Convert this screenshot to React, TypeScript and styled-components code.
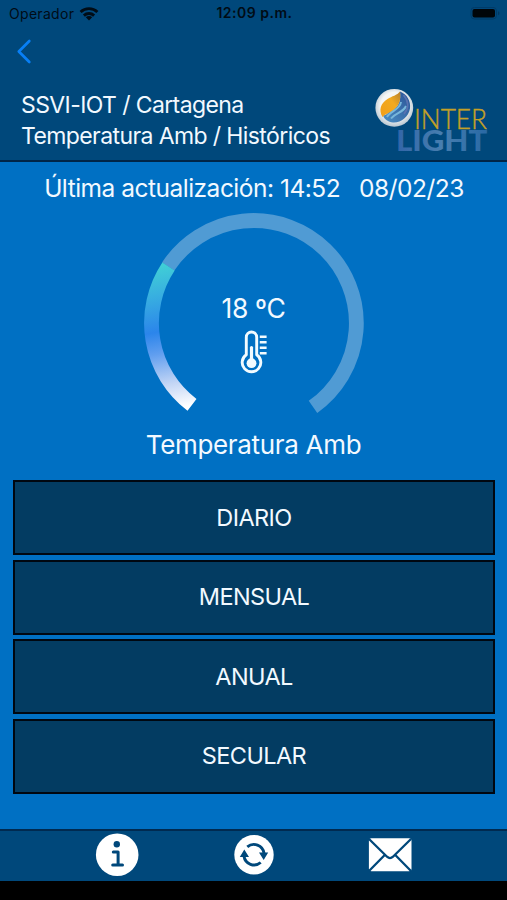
import React from "react";
import styled, { createGlobalStyle } from "styled-components";

const GlobalStyle = createGlobalStyle`
  *, *::before, *::after { box-sizing: border-box; }
  html, body { margin: 0; background: #000; }
  body { font-family: Inter, "Liberation Sans", sans-serif; color: #f2f9ff; }
  svg { display: block; }
`;

const Screen = styled.div`
  display: flex;
  flex-direction: column;
  width: 100%;
  height: 900px;
  overflow: hidden;
  background: #000;
`;

const Header = styled.header`
  display: flex;
  flex-direction: column;
  flex: 0 0 162px;
  background: #00487b;
  border-bottom: 2px solid #002547;
`;

const StatusBar = styled.div`
  display: grid;
  grid-template-columns: 1fr auto 1fr;
  align-items: center;
  height: 28px;
  padding: 0 7px 0 9px;
  color: #000c16;
`;

const Carrier = styled.div`
  display: flex;
  align-items: center;
  gap: 5px;
  font-size: 14px;
  line-height: 28px;
  letter-spacing: 0.3px;
`;

const Clock = styled.div`
  font-size: 14px;
  font-weight: 600;
  letter-spacing: 0.5px;
  line-height: 26px;
  margin-bottom: 2px;
  white-space: nowrap;
`;

const Battery = styled.div`
  display: flex;
  justify-content: flex-end;
`;

const BackButton = styled.button`
  width: 40px;
  height: 48px;
  margin-left: 8px;
  padding: 8px;
  border: 0;
  background: none;
`;

const TitleRow = styled.div`
  display: flex;
  justify-content: space-between;
  padding: 10px 18px 0 21px;
`;

const Breadcrumb = styled.h1`
  margin: 4px 0 0;
  font-size: 23px;
  font-weight: 400;
  line-height: 30.5px;
  letter-spacing: -0.6px;
  white-space: nowrap;
`;

const Line = styled.span`
  display: block;
`;

const Main = styled.main`
  display: flex;
  flex-direction: column;
  flex: 1;
  align-items: center;
  background: #0070c3;
`;

const Updated = styled.div`
  display: flex;
  gap: 19px;
  margin-top: 9px;
  padding-left: 1px;
  font-size: 24.5px;
  line-height: 34px;
  letter-spacing: -0.5px;
  white-space: nowrap;
`;

const Gauge = styled.div`
  display: grid;
  width: 222px;
  height: 210px;
  margin-top: 5px;
  > * { grid-area: 1 / 1; }
`;

const Reading = styled.div`
  display: flex;
  flex-direction: column;
  align-items: center;
  gap: 4px;
  padding-top: 81px;
  font-size: 26.5px;
  line-height: 34px;
  letter-spacing: -0.4px;
`;

const GaugeLabel = styled.div`
  margin-top: 6px;
  font-size: 26px;
  line-height: 38px;
  letter-spacing: -0.32px;
`;

const PeriodList = styled.nav`
  display: flex;
  flex-direction: column;
  align-self: stretch;
  gap: 4.5px;
  padding: 16px 12px 0 13px;
`;

const PeriodButton = styled.button`
  height: 75px;
  padding: 0;
  border: 2px solid #000710;
  background: #033c62;
  color: inherit;
  font: 400 23.5px/30px Inter, "Liberation Sans", sans-serif;
  letter-spacing: -0.6px;
`;

const Footer = styled.footer`
  display: grid;
  grid-template-columns: repeat(3, 136.5px);
  justify-content: center;
  justify-items: center;
  align-items: center;
  flex: 0 0 52px;
  padding-bottom: 2px;
  border-top: 2px solid #002a50;
  background: #00487b;
`;

const HomeArea = styled.div`
  flex: 0 0 19px;
`;

const periods = ["DIARIO", "MENSUAL", "ANUAL", "SECULAR"];

const WifiIcon = () => (
  <svg width="20" height="16" viewBox="0 0 20 16">
    <g fill="none" stroke="#000c16" strokeWidth="2.9">
      <path d="M1.6 6A12.2 12.2 0 0 1 18.4 6" />
      <path d="M4.9 9.6A7.4 7.4 0 0 1 15.1 9.6" />
    </g>
    <path d="M6.8 11.3a4.6 4.6 0 0 1 6.4 0L10 14.6Z" fill="#000c16" />
  </svg>
);

const BatteryIcon = () => (
  <svg width="30" height="14" viewBox="0 0 30 14">
    <rect x="1" y=".4" width="25.5" height="11.6" rx="3.5" fill="none" stroke="#003b67" />
    <rect x="2.500" y="1.900" width="22.500" height="8.600" rx="2" fill="#000509" />
    <path d="M28 4.200v4c2-.8 2-3.200 0-4Z" fill="#003862" />
  </svg>
);

const BackIcon = () => (
  <svg width="18" height="26" viewBox="0 0 18 26">
    <path d="M13.300 2.500 2.800 13 13.300 23.500" transform="translate(0 -.5)" fill="none" stroke="#087ff5" strokeWidth="2.700" strokeLinecap="round" strokeLinejoin="round" />
  </svg>
);

const Logo = () => (
  <svg width="116" height="72" viewBox="0 0 116 72" overflow="visible" aria-label="Inter Light">
    <defs>
      <radialGradient id="pearl" cx="50%" cy="45%" r="55%">
        <stop offset=".65" stopColor="#f5f6f5" />
        <stop offset="1" stopColor="#b7c5d0" />
      </radialGradient>
      <linearGradient id="flame" x1="0" y1="1" x2="1" y2="0">
        <stop offset="0" stopColor="#f19e18" />
        <stop offset=".6" stopColor="#f2aa20" />
        <stop offset="1" stopColor="#b5802e" />
      </linearGradient>
      <linearGradient id="wave" x1="0" y1="1" x2="1" y2="0">
        <stop offset="0" stopColor="#4a8fc4" />
        <stop offset="1" stopColor="#2a5296" />
      </linearGradient>
      <linearGradient id="steel" x1="0" x2="1">
        <stop offset="0" stopColor="#3265a8" />
        <stop offset=".5" stopColor="#477eaf" />
        <stop offset="1" stopColor="#2969a5" />
      </linearGradient>
    </defs>
    <circle cx="21.300" cy="21.800" r="18.900" fill="url(#pearl)" />
    <path d="M27 5.500C34 8 38 15 37 22.500 35.500 31 28 37 20 36.500c-5-.5-8.500-3-10-7 4 0 5-4 10-6 6-3 8-9 7-18Z" fill="url(#wave)" />
    <path d="M27 5.500C24 9.500 19 10 14.500 13 7.500 17.500 5.500 24 9.500 31c2-2.500 5.500-3.500 9-5.500C25 21.500 28.500 15.500 27 5.500Z" fill="url(#flame)" />
    <path d="M28 16c-1 8-11 9-14 15M33 20c-3 7-10 6-15 12.500" fill="none" stroke="#77b6da" strokeWidth="2" />
    <path d="M30.500 9c5 6 5.500 13 .5 19" fill="none" stroke="#5872b0" strokeWidth="1.600" />
    <text x="41" y="43" textLength="73" lengthAdjust="spacingAndGlyphs" fontFamily="Lato, sans-serif" fontSize="27.500" fontWeight="300" fill="#c4a027" stroke="#c4a027" strokeWidth=".4">INTER</text>
    <text x="23" y="65.200" textLength="91.300" lengthAdjust="spacingAndGlyphs" fontFamily="Lato, sans-serif" fontSize="28.300" fontWeight="900" fill="url(#steel)">LIGHT</text>
  </svg>
);

const GaugeArc = () => (
  <svg width="222" height="210" viewBox="143 210 222 210">
    <defs>
      <linearGradient id="progress" gradientUnits="userSpaceOnUse" x1="160" y1="266" x2="188" y2="406">
        <stop offset="0" stopColor="#40ced6" />
        <stop offset=".2" stopColor="#38afe0" />
        <stop offset=".45" stopColor="#2b85eb" />
        <stop offset=".6" stopColor="#609eef" />
        <stop offset=".82" stopColor="#c2d5f5" />
        <stop offset="1" stopColor="#fff" />
      </linearGradient>
    </defs>
    <g fill="none" strokeWidth="14.800">
      <path d="M168.200 266.500A102.600 102.600 0 1 1 313 406.900" stroke="#509bd4" />
      <path d="M192 404.800A102.600 102.600 0 0 1 168.500 266.500" stroke="url(#progress)" />
    </g>
  </svg>
);

const ThermometerIcon = () => (
  <svg width="30" height="46" viewBox="0 0 30 46">
    <g fill="none" stroke="#f2fbff" strokeWidth="2.900">
      <path d="M7.300 25.800V8.200a5.200 5.200 0 0 1 10.400 0V25.800a9.300 9.300 0 1 1-10.400 0Z" strokeLinejoin="round" />
      <path d="M20.800 7.700h6.800M20.800 13.200h6.800M20.800 18.700h6.800M20.800 24.300h6.800" strokeWidth="2.400" />
      <path d="M12.500 18.500v14" strokeWidth="3.200" strokeLinecap="round" />
    </g>
    <circle cx="12.500" cy="34.200" r="4.900" fill="#f2fbff" />
  </svg>
);

const InfoIcon = () => (
  <svg width="44" height="44" viewBox="0 0 44 44">
    <circle cx="22.200" cy="21.700" r="21.300" fill="#fff" />
    <circle cx="21.800" cy="11.200" r="3.200" fill="#00487b" />
    <path d="M18.300 19h4.800v12.800M17.700 32h9.800" fill="none" stroke="#00487b" strokeWidth="3" strokeLinecap="round" strokeLinejoin="round" />
  </svg>
);

const RefreshIcon = () => (
  <svg width="44" height="44" viewBox="0 0 44 44">
    <circle cx="22" cy="21.700" r="19.700" fill="#fff" />
    <g transform="translate(22 21.700)">
      <path d="M-10 1.500A10.200 10.200 0 0 0 6.700 7.800M10 -1.500A10.200 10.200 0 0 0 -6.700 -7.800" fill="none" stroke="#00487b" strokeWidth="2.900" />
      <path d="M-9.700 -5.300-5 2.300h-9.200ZM9.700 5.300 5-2.300h9.200Z" fill="#00487b" />
    </g>
  </svg>
);

const MailIcon = () => (
  <svg width="44" height="34" viewBox="0 0 44 34">
    <rect x=".9" y=".3" width="42.600" height="33" rx="2.500" fill="#fff" />
    <path d="M1 1 16.500 16.200l2.500 2.500q3 2.800 6 0l2.500-2.500L43 1M1 33 16.500 17.200M43 33 27.500 17.200" fill="none" stroke="#00487b" strokeWidth="2.300" />
  </svg>
);

export default function App() {
  return (
    <>
      <GlobalStyle />
      <Screen>
        <Header>
          <StatusBar>
            <Carrier>Operador <WifiIcon /></Carrier>
            <Clock>12:09 p.m.</Clock>
            <Battery><BatteryIcon /></Battery>
          </StatusBar>
          <BackButton aria-label="Atrás"><BackIcon /></BackButton>
          <TitleRow>
            <Breadcrumb>
              <Line>SSVI-IOT / Cartagena</Line>
              <Line>Temperatura Amb / Históricos</Line>
            </Breadcrumb>
            <Logo />
          </TitleRow>
        </Header>
        <Main>
          <Updated>
            <span>Última actualización: 14:52</span>
            <span>08/02/23</span>
          </Updated>
          <Gauge>
            <GaugeArc />
            <Reading>
              <span>18 ºC</span>
              <ThermometerIcon />
            </Reading>
          </Gauge>
          <GaugeLabel>Temperatura Amb</GaugeLabel>
          <PeriodList>
            {periods.map((label) => (
              <PeriodButton key={label}>{label}</PeriodButton>
            ))}
          </PeriodList>
        </Main>
        <Footer>
          <InfoIcon />
          <RefreshIcon />
          <MailIcon />
        </Footer>
        <HomeArea />
      </Screen>
    </>
  );
}
